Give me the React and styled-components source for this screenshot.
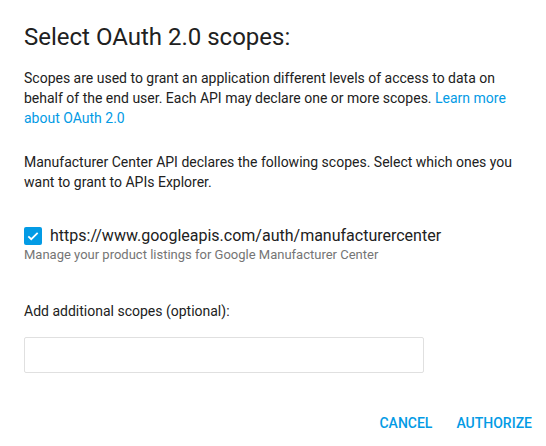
import styled, { createGlobalStyle } from "styled-components";

const GlobalStyle = createGlobalStyle`
  body {
    margin: 0;
    background: #fff;
    font-family: Roboto, "Noto Sans", Arial, sans-serif;
    color: #212121;
  }
`;

export default function App() {
  return (
    <Dialog>
      <GlobalStyle />
      <Title>Select OAuth 2.0 scopes:</Title>
      <Paragraph>
        Scopes are used to grant an application different levels of access to
        data on behalf of the end user. Each API may declare one or more scopes.{" "}
        <Link href="#">Learn more about OAuth 2.0</Link>
      </Paragraph>
      <Paragraph $gap={24}>
        Manufacturer Center API declares the following scopes. Select which ones
        you want to grant to APIs Explorer.
      </Paragraph>
      <ScopeRow>
        <CheckBox>
          <svg width="14" height="14" viewBox="0 0 24 24">
            <path
              d="M4 12.5l5 5L20 6.5"
              fill="none"
              stroke="#fff"
              strokeWidth="3"
            />
          </svg>
        </CheckBox>
        <ScopeUrl>https://www.googleapis.com/auth/manufacturercenter</ScopeUrl>
      </ScopeRow>
      <ScopeDescription>
        Manage your product listings for Google Manufacturer Center
      </ScopeDescription>
      <Label>Add additional scopes (optional):</Label>
      <ScopeInput type="text" />
      <Actions>
        <ActionButton>Cancel</ActionButton>
        <ActionButton>Authorize</ActionButton>
      </Actions>
    </Dialog>
  );
}

const Dialog = styled.div`
  width: 546px;
  height: 446px;
  box-sizing: border-box;
  padding: 21px 6px 0 24px;
  display: flex;
  flex-direction: column;
  overflow: hidden;
`;

const Title = styled.h2`
  margin: 0 0 15px;
  font-size: 24px;
  line-height: 32px;
  font-weight: 400;
  color: #212121;
`;

const Paragraph = styled.p`
  margin: ${(p) => p.$gap || 0}px 18px 0 0;
  font-size: 14px;
  line-height: 20px;
  color: #212121;
`;

const Link = styled.a`
  color: #039be5;
  text-decoration: none;
`;

const ScopeRow = styled.div`
  display: flex;
  align-items: center;
  gap: 8px;
  margin-top: 32px;
  height: 24px;
`;

const CheckBox = styled.span`
  width: 18px;
  height: 18px;
  border-radius: 2px;
  background: #039be5;
  display: flex;
  align-items: center;
  justify-content: center;
`;

const ScopeUrl = styled.span`
  font-size: 16px;
  line-height: 24px;
  color: #212121;
`;

const ScopeDescription = styled.div`
  font-size: 13px;
  line-height: 14px;
  color: #757575;
`;

const Label = styled.div`
  margin-top: 39px;
  font-size: 14px;
  line-height: 20px;
  color: #212121;
`;

const ScopeInput = styled.input`
  margin-top: 16px;
  width: 400px;
  height: 36px;
  box-sizing: border-box;
  border: 1px solid #e0e0e0;
  border-radius: 2px;
  outline: none;
  padding: 0 8px;
  font-family: inherit;
  font-size: 14px;
`;

const Actions = styled.div`
  margin-top: 32px;
  display: flex;
  justify-content: flex-end;
  gap: 8px;
`;

const ActionButton = styled.button`
  height: 36px;
  padding: 0 8px;
  border: none;
  background: none;
  font-family: inherit;
  font-size: 14px;
  line-height: 36px;
  font-weight: 500;
  text-transform: uppercase;
  color: #039be5;
  cursor: pointer;
`;
